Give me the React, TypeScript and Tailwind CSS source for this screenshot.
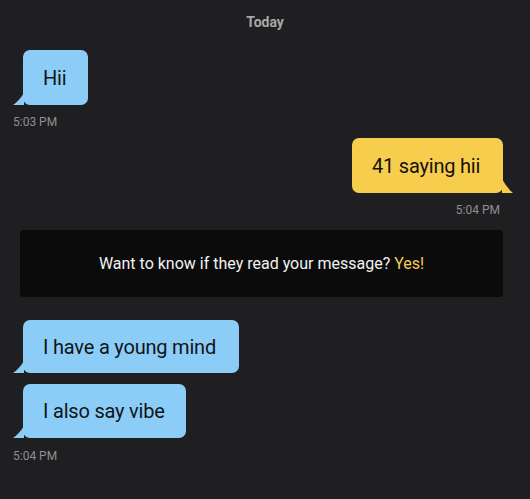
const font = { fontFamily: "Roboto, 'Liberation Sans', sans-serif" };

function Incoming({ text, width, height }: { text: string; width: number; height: number }) {
  return (
    <div className="relative ml-[23px] self-start">
      <svg
        className="absolute bottom-0 left-[-10px]"
        width="11"
        height="12"
        viewBox="0 0 11 12"
      >
        <path d="M11 0 L11 12 L0 12 Q6 8 11 0 Z" fill="#8ccdf8" />
      </svg>
      <div
        className="flex items-center rounded-[7px] bg-[#8ccdf8] pl-[20px] text-[20px] tracking-[-0.2px] text-[#101418]"
        style={{ width, height }}
      >
        {text}
      </div>
    </div>
  );
}

export default function App() {
  return (
    <div
      className="flex h-[499px] w-[530px] flex-col overflow-hidden bg-[#1f1f21]"
      style={font}
    >
      <div className="pt-[14px] text-center text-[14px] font-bold leading-[16px] text-[#a8a8aa]">
        Today
      </div>

      <div className="mt-[20px] flex flex-col">
        <Incoming text="Hii" width={65} height={55} />
        <div className="ml-[13px] mt-[10px] text-[12px] leading-[14px] text-[#8f8f92]">
          5:03 PM
        </div>
      </div>

      <div className="mt-[9px] flex flex-col items-end">
        <div className="relative mr-[27px]">
          <svg
            className="absolute bottom-0 right-[-10px]"
            width="11"
            height="14"
            viewBox="0 0 11 14"
          >
            <path d="M0 0 L0 14 L11 14 Q5 9 0 0 Z" fill="#f7cd4e" />
          </svg>
          <div className="flex h-[55px] w-[151px] items-center rounded-[7px] bg-[#f7cd4e] pl-[20px] text-[20px] tracking-[-0.2px] text-[#15120a]">
            41 saying hii
          </div>
        </div>
        <div className="mr-[30px] mt-[10px] text-[12px] leading-[14px] text-[#8f8f92]">
          5:04 PM
        </div>
      </div>

      <div className="ml-[20px] mr-[27px] mt-[13px] flex h-[67px] items-center justify-center rounded-[4px] bg-[#0b0b0c] text-[16px] text-[#f2f2f2]">
        <span>
          Want to know if they read your message?{" "}
          <span className="text-[#f3cd5a]">Yes!</span>
        </span>
      </div>

      <div className="mt-[23px] flex flex-col gap-[11px]">
        <Incoming text="I have a young mind" width={216} height={53} />
        <Incoming text="I also say vibe" width={163} height={54} />
      </div>
      <div className="ml-[13px] mt-[11px] text-[12px] leading-[14px] text-[#8f8f92]">
        5:04 PM
      </div>
    </div>
  );
}
